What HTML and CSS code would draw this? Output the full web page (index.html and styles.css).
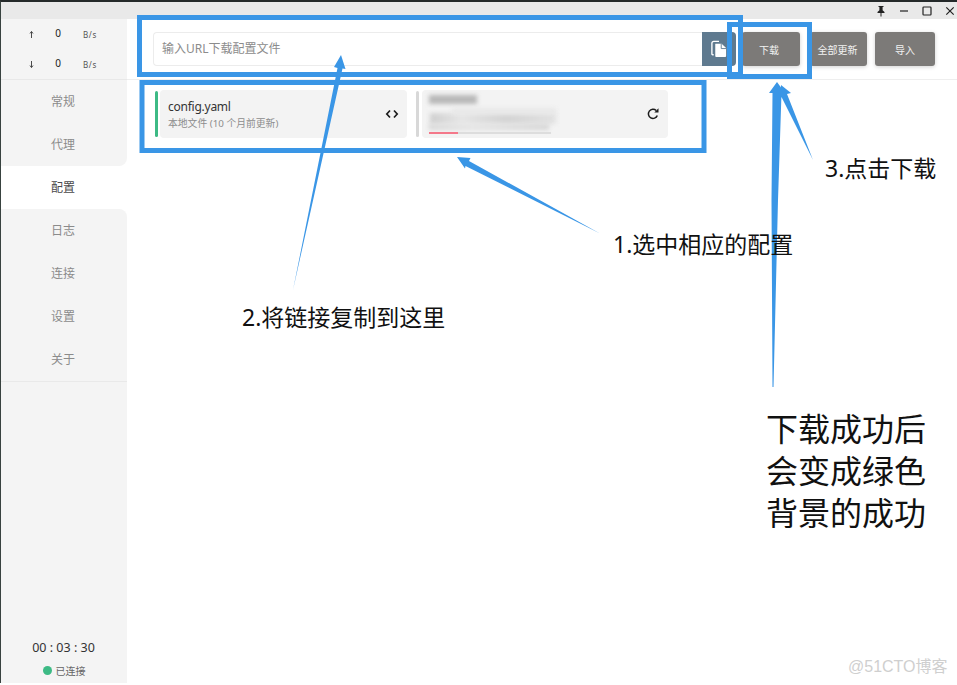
FILE: index.html
```html
<!DOCTYPE html>
<html lang="zh-CN">
<head>
<meta charset="utf-8">
<title>配置</title>
<link rel="stylesheet" href="styles.css">
</head>
<body>
<div class="app">
  <div class="titlebar">
    <svg class="win-icon" viewBox="0 0 12 12"><path d="M3.5 1h5v1H7.6v3.2L9.5 7v1H6.5v3.5h-1V8h-3V7l1.900-1.800V2H3.500z" fill="#222"/></svg>
    <svg class="win-icon" viewBox="0 0 12 12"><path d="M2 6h8" stroke="#222" stroke-width="1.200" fill="none"/></svg>
    <svg class="win-icon" viewBox="0 0 12 12"><rect x="2" y="2" width="8" height="8" rx="0.800" stroke="#222" stroke-width="1.200" fill="none"/></svg>
    <svg class="win-icon" viewBox="0 0 12 12"><path d="M2.300 2.300l7.400 7.400M9.700 2.300l-7.400 7.400" stroke="#222" stroke-width="1.200" fill="none"/></svg>
  </div>
  <div class="body">
    <aside class="sidebar">
      <div class="traffic">
        <div class="traffic-row">
          <svg class="arrow" viewBox="0 0 8 10"><path d="M4 9V2M2.300 3.800L4 1.500l1.700 2.300" fill="none" stroke="#333" stroke-width="1"/></svg>
          <span class="num">0</span><span class="unit">B/s</span>
        </div>
        <div class="traffic-row">
          <svg class="arrow" viewBox="0 0 8 10"><path d="M4 1v7M2.300 6.200L4 8.500l1.700-2.300" fill="none" stroke="#333" stroke-width="1"/></svg>
          <span class="num">0</span><span class="unit">B/s</span>
        </div>
      </div>
      <nav class="nav">
        <div class="nav-item">常规</div>
        <div class="nav-item before-active">代理</div>
        <div class="nav-item active">配置</div>
        <div class="nav-item after-active">日志</div>
        <div class="nav-item">连接</div>
        <div class="nav-item">设置</div>
        <div class="nav-item">关于</div>
      </nav>
      <div class="status">
        <div class="clock">00 : 03 : 30</div>
        <div class="conn"><span class="dot"></span>已连接</div>
      </div>
    </aside>
    <main class="main">
      <header class="toolbar">
        <div class="url-input">输入URL下载配置文件</div>
        <button class="paste-btn">
          <svg class="paste-icon" viewBox="0 0 18 20"><path d="M3 16.500H1.800A.8.8 0 0 1 1 15.700V3.500a2 2 0 0 1 2-2h6" fill="none" stroke="#fff" stroke-width="1.500"/><path d="M5 4h7l5 5v9a1 1 0 0 1-1 1H5.800a1 1 0 0 1-1-1V5a1 1 0 0 1 .2-1z" fill="#fff"/><path d="M11.500 4v5.500H17" fill="none" stroke="#5f7a8f" stroke-width="1"/></svg>
        </button>
        <button class="btn btn-download">下载</button>
        <button class="btn btn-update">全部更新</button>
        <button class="btn btn-import">导入</button>
      </header>
      <section class="profiles">
        <div class="bar bar-on"></div>
        <div class="card card-local">
          <div class="card-text">
            <div class="card-name">config.yaml</div>
            <div class="card-sub">本地文件 (10 个月前更新)</div>
          </div>
          <svg class="card-icon" viewBox="0 0 14 14"><path d="M5 3.500L1.800 7 5 10.500M9 3.500L12.200 7 9 10.500" fill="none" stroke="#1c1c1c" stroke-width="1.700"/></svg>
        </div>
        <div class="bar bar-off"></div>
        <div class="card card-remote">
          <div class="mask mask-a"></div>
          <div class="mask mask-b"></div>
          <div class="mask mask-c"></div>
          <div class="mask mask-d"></div>
          <div class="progress"><div class="progress-fill"></div></div>
          <svg class="card-icon card-refresh" viewBox="0 0 14 14"><path d="M11.300 8.500A4.600 4.600 0 1 1 10.200 3.500" fill="none" stroke="#1c1c1c" stroke-width="1.500"/><path d="M8.300 5.500h4.200V1.300z" fill="#1c1c1c"/></svg>
        </div>
      </section>
    </main>
  </div>
</div>

<svg class="overlay" viewBox="0 0 957 685">
  <g class="note-box">
    <rect x="139.500" y="17.500" width="601" height="57"/>
    <rect x="142" y="82.500" width="562" height="68"/>
    <rect x="729.500" y="24.500" width="80" height="52"/>
  </g>
  <g class="note-arrow">
    <polygon points="293,290 337.500,68 334,67 341,55 345.500,69 342.500,68.500"/>
    <polygon points="600,233.500 465.500,166 465,168.500 457,157 470.500,158 469,161"/>
    <polygon points="772.500,387 771.500,200 772.500,93 769,93 777,82 785,93 781.500,93 778,200 773.500,387"/>
    <polygon points="813,160 781.500,97 780,100 781,85 791,93 787,94"/>
  </g>
</svg>
<div class="note note-1">1.选中相应的配置</div>
<div class="note note-2">2.将链接复制到这里</div>
<div class="note note-3">3.点击下载</div>
<div class="note note-big">下载成功后<br>会变成绿色<br>背景的成功</div>
<div class="watermark">@51CTO博客</div>
</body>
</html>
```
FILE: styles.css
```css
* { box-sizing: border-box; }
html, body { margin: 0; padding: 0; width: 957px; height: 685px; overflow: hidden; background: #fff; }
body { font-family: "Noto Sans", "Noto Sans CJK SC", sans-serif; color: #333; position: relative; }

.app { width: 957px; height: 683px; display: flex; flex-direction: column; border-left: 1px solid #38423f; border-top: 2px solid #24292a; }
.titlebar { height: 17px; background: #e9e9e9; display: flex; justify-content: flex-end; align-items: center; padding-right: 1px; gap: 11px; flex: none; }
.win-icon { width: 12px; height: 12px; flex: none; }
.body { flex: 1; display: flex; min-height: 0; }

.sidebar { width: 126px; flex: none; display: flex; flex-direction: column; background: #f4f4f4; }
.traffic { height: 61px; border-bottom: 1px solid #e8e8e8; display: flex; flex-direction: column; flex: none; }
.traffic-row { height: 30px; display: flex; align-items: center; font-size: 10px; color: #333; }
.arrow { width: 7px; height: 9px; margin-left: 27px; flex: none; }
.num { width: 12px; margin-left: 17px; margin-bottom: 2px; text-align: center; font-size: 10px; color: #222; }
.unit { margin-left: 19px; font-size: 8px; letter-spacing: 0.600px; color: #555; }

.nav { flex: none; border-bottom: 1px solid #e9e9e9; display: flex; flex-direction: column; background: #fff; }
.nav-item { height: 43px; display: flex; align-items: center; justify-content: center; padding: 0 2px 2px 0; font-size: 12px; color: #8b8b8b; background: #f4f4f4; }
.nav-item.active { background: #fff; color: #4a4a4a; }
.before-active { border-bottom-right-radius: 8px; }
.after-active { border-top-right-radius: 8px; }
.status { flex: 1; display: flex; flex-direction: column; justify-content: flex-end; align-items: center; padding-bottom: 1px; }
.clock { font-size: 12.500px; color: #333; height: 23px; line-height: 23px; padding-right: 1px; }
.conn { font-size: 10px; color: #666; display: flex; align-items: center; height: 23px; }
.dot { width: 9px; height: 9px; border-radius: 50%; background: #3dba85; margin-right: 4px; }

.main { flex: 1; display: flex; flex-direction: column; min-width: 0; }
.toolbar { height: 61px; flex: none; border-bottom: 1px solid #eeeeee; padding: 13px 22px 13px 26px; display: flex; align-items: stretch; }
.url-input { width: 549px; height: 34px; border: 1px solid #ececec; border-right: none; border-radius: 4px 0 0 4px; padding-left: 8px; font-size: 12px; line-height: 32px; color: #8c8c8c; background: #fff; }
.paste-btn { width: 34px; height: 34px; padding: 0; border: none; background: #5f7a8f; border-radius: 0 4px 4px 0; display: flex; align-items: center; justify-content: center; }
.paste-icon { width: 16px; height: 18px; }
.btn { height: 34px; padding: 0; border: none; border-radius: 3px; background: #7c7a78; color: #f2f2f2; font-family: inherit; font-size: 10px; box-shadow: 0 1px 4px rgba(0,0,0,.18); }
.btn-download { width: 58px; margin-left: 6px; padding-right: 4px; }
.btn-update { width: 57px; margin-left: 10px; padding-right: 2px; }
.btn-import { width: 60px; margin-left: 8px; }

.profiles { display: flex; align-items: flex-start; padding: 10px 0 0 28px; }
.bar { width: 3px; height: 46px; margin-top: 1px; border-radius: 2px; }
.bar-on { background: #3dba85; }
.bar-off { background: #d8d8d8; margin-left: 9px; }
.card { height: 48px; background: #f3f3f3; border-radius: 4px; position: relative; display: flex; align-items: center; justify-content: space-between; }
.card-local { width: 247px; margin-left: 2px; padding: 0 8px 0 8px; }
.card-remote { width: 246px; margin-left: 3px; padding: 0 8px 0 0; justify-content: flex-end; overflow: hidden; }
.card-name { font-size: 12px; letter-spacing: -0.250px; line-height: 16px; color: #333; }
.card-sub { font-size: 9.800px; line-height: 13px; margin-top: 2px; color: #8d8d8d; }
.card-icon { width: 14px; height: 14px; flex: none; }
.card-refresh { position: relative; }

.mask { position: absolute; filter: blur(2px); }
.mask-a { left: 7px; top: 5px; width: 48px; height: 9px; background: #b8b8b8; }
.mask-b { left: 8px; top: 23px; width: 126px; height: 11px; background: linear-gradient(90deg, #cfcfcf, #e6e6e6 25%, #d4d4d4 60%, #e2e2e2); }
.mask-c { left: 30px; top: 18px; width: 104px; height: 6px; background: #e8e8e8; }
.mask-d { left: 7px; top: 34px; width: 120px; height: 6px; background: linear-gradient(90deg, #d8d8d8, #e4e4e4 35%, #d6d6d6); }
.progress { position: absolute; left: 7px; top: 42px; width: 122px; height: 2px; background: #dddddd; }
.progress-fill { width: 29px; height: 100%; background: #f4788a; }

.overlay { position: absolute; left: 0; top: 0; width: 957px; height: 685px; pointer-events: none; }
.note-box rect { fill: none; stroke: #3a96e6; stroke-width: 5px; }
.note-arrow polygon { fill: #3a96e6; }
.note { position: absolute; color: #111; font-family: "Noto Sans", "Noto Sans CJK SC", sans-serif; font-size: 23px; line-height: 30px; white-space: nowrap; }
.note-1 { left: 613px; top: 229px; }
.note-2 { left: 242px; top: 302px; }
.note-3 { left: 825px; top: 153px; }
.note-big { left: 766px; top: 408px; font-size: 32px; line-height: 42px; }
.watermark { position: absolute; left: 848px; top: 658px; font-family: "Liberation Sans", "Noto Sans CJK SC", sans-serif; font-size: 16px; line-height: 18px; color: #cfcfcf; }
```
